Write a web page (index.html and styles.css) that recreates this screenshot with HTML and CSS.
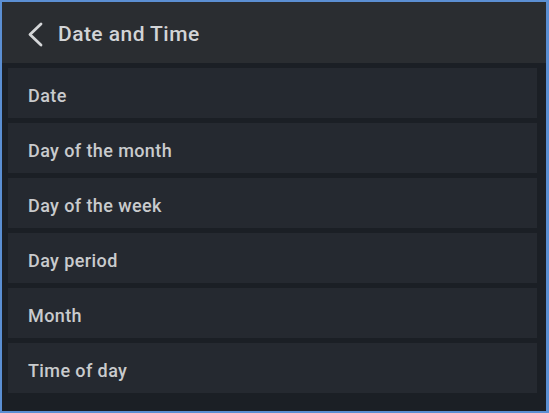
FILE: index.html
```html
<!DOCTYPE html>
<html lang="en">
<head>
    <meta charset="UTF-8">
    <meta name="viewport" content="width=device-width, initial-scale=1.0">
    <title>Date and Time</title>
    <link rel="stylesheet" href="styles.css">
</head>
<body>
    <div class="panel">
        <div class="header">
            <svg class="back" width="18" height="25" viewBox="0 0 18 25">
                <path d="M15 2 L4 12.5 L15 23" fill="none" stroke="#d4d6d8" stroke-width="2.8" stroke-linecap="round" stroke-linejoin="round"/>
            </svg>
            <h1>Date and Time</h1>
        </div>
        <ul class="list">
            <li>Date</li>
            <li>Day of the month</li>
            <li>Day of the week</li>
            <li>Day period</li>
            <li>Month</li>
            <li>Time of day</li>
        </ul>
    </div>
</body>
</html>
```

FILE: styles.css
```css
html, body {
    margin: 0;
    padding: 0;
    background: #5a8ccc;
}
body {
    width: 549px;
    height: 413px;
    font-family: Roboto, "Liberation Sans", sans-serif;
}
.panel {
    box-sizing: border-box;
    width: 549px;
    height: 413px;
    border-style: solid;
    border-color: #5b8fd3;
    border-width: 2px 3px 2px 2px;
    background-color: #1b1f25;
    display: flex;
    flex-direction: column;
}
.header {
    box-sizing: border-box;
    height: 61px;
    background-color: #2a2d31;
    display: flex;
    align-items: center;
    padding-left: 24px;
    padding-top: 3px;
    flex-shrink: 0;
}
.back {
    margin-right: 14px;
}
h1 {
    margin: 0;
    font-size: 21px;
    font-weight: 500;
    letter-spacing: 0.45px;
    color: #d2d4d6;
}
.list {
    list-style: none;
    margin: 0;
    padding: 5px 9px 0 6px;
    display: flex;
    flex-direction: column;
    gap: 5px;
}
.list li {
    box-sizing: border-box;
    height: 50px;
    background-color: #252930;
    display: flex;
    align-items: center;
    padding-left: 20px;
    padding-top: 4px;
    font-size: 18px;
    font-weight: 500;
    letter-spacing: 0.4px;
    color: #c9cbcd;
}
```
